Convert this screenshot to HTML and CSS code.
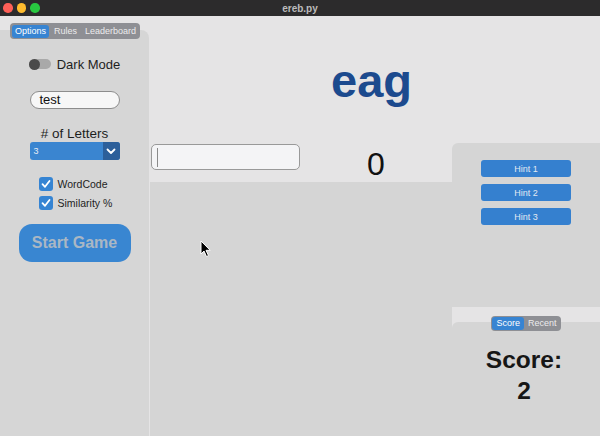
FILE: index.html
```html
<!DOCTYPE html>
<html>
<head>
<meta charset="utf-8">
<title>ereb.py</title>
<link rel="stylesheet" href="styles.css">
</head>
<body>
<header class="titlebar">
  <div class="lights">
    <span class="light red"></span>
    <span class="light yellow"></span>
    <span class="light green"></span>
  </div>
  <div class="title">ereb.py</div>
</header>
<div class="window">
  <aside class="sidebar">
    <div class="seg tabs">
      <span class="seg-item active">Options</span>
      <span class="seg-item">Rules</span>
      <span class="seg-item">Leaderboard</span>
    </div>
    <div class="side-panel">
      <div class="toggle-row">
        <span class="toggle"><span class="knob"></span></span>
        <span class="label">Dark Mode</span>
      </div>
      <div class="name-field">test</div>
      <div class="letters-label"># of Letters</div>
      <div class="select">
        <span class="select-value">3</span>
        <span class="select-btn">
          <svg width="10" height="7" viewBox="0 0 10 7"><path d="M1.5 1.5 L5 5 L8.5 1.5" fill="none" stroke="#fff" stroke-width="1.8" stroke-linecap="round" stroke-linejoin="round"/></svg>
        </span>
      </div>
      <div class="checks">
        <div class="check-row">
          <span class="checkbox"><svg width="14" height="14" viewBox="0 0 14 14"><path d="M3.5 7.2 L6 9.8 L10.5 4" fill="none" stroke="#fff" stroke-width="1.8" stroke-linecap="round" stroke-linejoin="round"/></svg></span>
          <span class="check-label">WordCode</span>
        </div>
        <div class="check-row">
          <span class="checkbox"><svg width="14" height="14" viewBox="0 0 14 14"><path d="M3.5 7.2 L6 9.8 L10.5 4" fill="none" stroke="#fff" stroke-width="1.8" stroke-linecap="round" stroke-linejoin="round"/></svg></span>
          <span class="check-label">Similarity %</span>
        </div>
      </div>
      <div class="start-btn">Start Game</div>
    </div>
  </aside>
  <main class="game">
    <div class="word-area"><div class="word">eag</div></div>
    <div class="game-body">
      <div class="center-col">
        <div class="guess-row">
          <div class="guess-input"><span class="caret"></span></div>
          <div class="count">0</div>
        </div>
        <div class="guess-list"></div>
      </div>
      <div class="right-col">
        <div class="hint-panel">
          <div class="hint-btn">Hint 1</div>
          <div class="hint-btn">Hint 2</div>
          <div class="hint-btn">Hint 3</div>
        </div>
        <div class="score-area">
          <div class="seg score-tabs">
            <span class="seg-item active">Score</span>
            <span class="seg-item">Recent</span>
          </div>
          <div class="score-panel">
            <div class="score-text">Score:<br>2</div>
          </div>
        </div>
      </div>
    </div>
  </main>
</div>
<svg class="cursor" width="12" height="18" viewBox="0 0 12 18">
  <path d="M1 1 L1 14 L4 11 L6.5 16.5 L8.5 15.6 L6 10.3 L10.2 10.3 Z" fill="#000" stroke="#fff" stroke-width="1" stroke-linejoin="round"/>
</svg>
</body>
</html>
```

FILE: styles.css
```css
* { box-sizing: border-box; }
html, body { margin: 0; padding: 0; }
body {
  width: 600px;
  height: 436px;
  overflow: hidden;
  background: #e5e4e5;
  font-family: "Liberation Sans", Arial, sans-serif;
  color: #1b1b1b;
  position: relative;
}
.titlebar {
  height: 16px;
  background: #2c2b2c;
  display: flex;
  align-items: center;
  justify-content: center;
  position: relative;
}
.lights {
  position: absolute;
  left: 3px;
  top: 3px;
  display: flex;
  gap: 4px;
}
.light { width: 9.5px; height: 9.5px; border-radius: 50%; display: block; }
.red { background: #fe5f57; }
.yellow { background: #febc2e; }
.green { background: #28c840; }
.title {
  font-size: 10px;
  font-weight: bold;
  color: #bcbcbc;
}
.window {
  display: flex;
  gap: 1px;
  height: 420px;
}
.sidebar {
  width: 149px;
  display: flex;
  flex-direction: column;
}
.seg {
  display: flex;
  align-items: center;
  background: #8e8f94;
  border-radius: 4px;
  padding: 0 2px;
  height: 16px;
  font-size: 9px;
  color: #ececec;
  position: relative;
  z-index: 1;
  white-space: nowrap;
}
.seg-item { padding: 0 3px; height: 13px; line-height: 13px; border-radius: 3px; }
.seg-item.active { background: #3784d2; color: #fff; }
.tabs {
  margin: 7px 9px -9px 10px;
  gap: 2px;
}
.side-panel {
  flex: 1;
  background: #d6d6d6;
  border-top-right-radius: 8px;
  display: flex;
  flex-direction: column;
  align-items: center;
  padding-top: 27px;
}
.toggle-row {
  display: flex;
  align-items: center;
  gap: 6px;
  height: 14px;
}
.toggle {
  width: 22px;
  height: 10px;
  border-radius: 5px;
  background: #a9a9a9;
  position: relative;
  display: block;
}
.knob {
  position: absolute;
  left: 0;
  top: -0.5px;
  width: 11px;
  height: 11px;
  border-radius: 50%;
  background: #4a4a4a;
}
.label { font-size: 13px; color: #1e1e1e; }
.name-field {
  margin-top: 20px;
  width: 90px;
  height: 18px;
  border: 1px solid #8d8d8d;
  border-radius: 9px;
  background: #f7f7f7;
  font-size: 13px;
  line-height: 16px;
  padding-left: 9px;
  color: #111;
}
.letters-label {
  margin-top: 16px;
  font-size: 13.5px;
  line-height: 17px;
  color: #1e1e1e;
}
.select {
  margin-top: 0;
  width: 90px;
  height: 18px;
  border-radius: 3px;
  background: #3a85d0;
  display: flex;
  overflow: hidden;
}
.select-value {
  flex: 1;
  font-size: 9px;
  line-height: 18px;
  color: #e8eef6;
  padding-left: 4px;
}
.select-btn {
  width: 17px;
  background: #2c5f9a;
  display: flex;
  align-items: center;
  justify-content: center;
}
.checks {
  margin-top: 17px;
  display: flex;
  flex-direction: column;
  gap: 5px;
  width: 72px;
  white-space: nowrap;
}
.check-row { display: flex; align-items: center; gap: 5px; height: 14px; }
.checkbox {
  flex: none;
  width: 14px;
  height: 14px;
  border-radius: 3px;
  background: #3584d3;
  display: block;
}
.checkbox svg { display: block; }
.check-label { font-size: 10.5px; color: #1e1e1e; }
.start-btn {
  margin-top: 14px;
  width: 112px;
  height: 38px;
  border-radius: 13px;
  background: #3986d1;
  color: #aab7c4;
  font-size: 16px;
  font-weight: bold;
  display: flex;
  align-items: center;
  justify-content: center;
}
.game {
  flex: 1;
  display: flex;
  flex-direction: column;
}
.word-area {
  height: 127px;
  padding-top: 41px;
  padding-right: 7px;
  display: flex;
  justify-content: center;
}
.word {
  font-size: 47px;
  line-height: 47px;
  font-weight: bold;
  color: #1c4a8e;
}
.game-body {
  flex: 1;
  display: flex;
}
.center-col {
  width: 302px;
  display: flex;
  flex-direction: column;
}
.guess-row {
  height: 39px;
  display: flex;
}
.guess-input {
  margin: 1px 0 0 1px;
  width: 149px;
  height: 26px;
  border: 1px solid #999;
  border-radius: 5px;
  background: #f4f4f6;
  padding: 3px 0 0 5px;
}
.caret {
  display: block;
  width: 1px;
  height: 19px;
  background: #8a8a8a;
}
.count {
  flex: 1;
  text-align: center;
  font-size: 32px;
  line-height: 38px;
  padding-top: 2px;
  color: #111;
}
.guess-list {
  flex: 1;
  background: #d5d5d5;
}
.right-col {
  flex: 1;
  display: flex;
  flex-direction: column;
}
.hint-panel {
  height: 164px;
  background: #d5d5d5;
  border-top-left-radius: 6px;
  display: flex;
  flex-direction: column;
  align-items: center;
  padding-top: 17px;
  gap: 7px;
}
.hint-btn {
  width: 90px;
  height: 17px;
  border-radius: 3px;
  background: #3580cf;
  color: #e2e9f2;
  font-size: 9px;
  display: flex;
  align-items: center;
  justify-content: center;
}
.score-area {
  flex: 1;
  display: flex;
  flex-direction: column;
  align-items: center;
  padding-top: 9px;
}
.score-tabs {
  height: 15px;
  margin-bottom: -9px;
  padding: 0 1px;
  gap: 1px;
}
.score-tabs .seg-item { padding: 0 3px; }
.score-tabs .seg-item.active { padding: 0 4px; }
.score-panel {
  align-self: stretch;
  flex: 1;
  background: #d5d5d5;
  border-top-left-radius: 6px;
  padding-top: 22px;
  padding-right: 4px;
  display: flex;
  justify-content: center;
}
.score-text {
  font-size: 24.5px;
  line-height: 31px;
  font-weight: bold;
  text-align: center;
  color: #161616;
}
.cursor {
  position: absolute;
  left: 200px;
  top: 240px;
}
```
